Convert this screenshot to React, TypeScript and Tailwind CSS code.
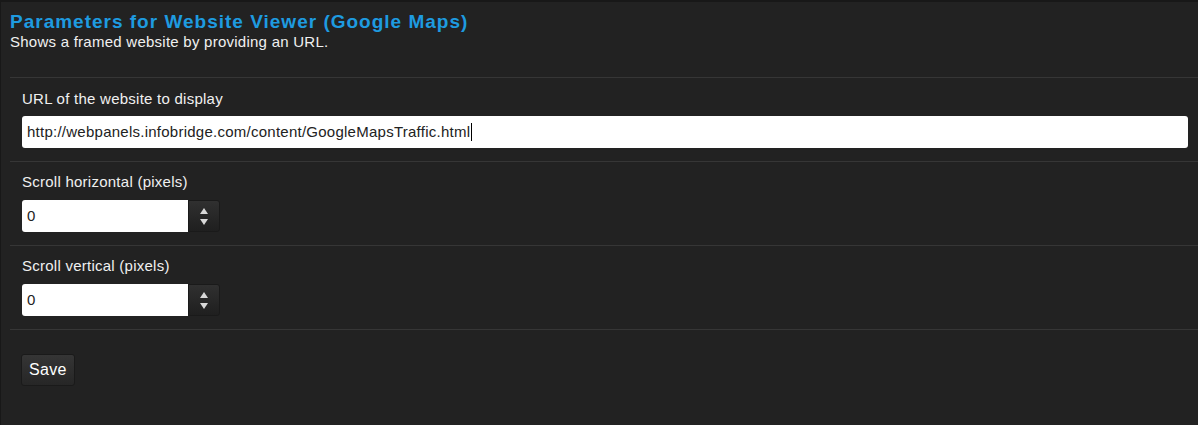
import React from "react";

function Spinner() {
  return (
    <div className="flex h-[32px] w-[32px] flex-col items-center justify-center rounded-r-[3px] border border-[#1a1a1a] bg-gradient-to-b from-[#303030] to-[#1f1f1f]">
      <svg width="8" height="6" viewBox="0 0 8 6" className="mb-[5px]">
        <polygon points="4,0 8,6 0,6" fill="#d8d8d8" />
      </svg>
      <svg width="8" height="6" viewBox="0 0 8 6">
        <polygon points="0,0 8,0 4,6" fill="#d8d8d8" />
      </svg>
    </div>
  );
}

function NumberRow({ label }: { label: string }) {
  return (
    <div className="border-t border-[#363636] pl-[12px] pt-[10px] pb-[13px]">
      <div className="mb-[8px] text-[15px] leading-[20px] tracking-[0.25px] text-[#f0f0f0]">{label}</div>
      <div className="flex">
        <div className="flex h-[32px] w-[166px] items-center rounded-l-[3px] bg-white pl-[5px] text-[15px] text-[#222]">
          0
        </div>
        <Spinner />
      </div>
    </div>
  );
}

export default function App() {
  return (
    <div
      className="h-[425px] w-[1198px] overflow-hidden border-l border-t-2 border-[#181818] bg-[#222222]"
      style={{ fontFamily: '"Liberation Sans", Arial, sans-serif' }}
    >
      <div className="pl-[9px] pt-[9px]">
        <h1 className="text-[19px] font-bold leading-[22px] tracking-[1px] text-[#1e9be0]">
          Parameters for Website Viewer (Google Maps)
        </h1>
        <p className="text-[15px] leading-[18px] tracking-[0.25px] text-[#f0f0f0]">
          Shows a framed website by providing an URL.
        </p>
        <div className="mt-[26px]">
          <div className="border-t border-[#363636] pl-[12px] pt-[11px] pb-[13px]">
            <div className="mb-[7px] text-[15px] leading-[20px] tracking-[0.25px] text-[#f0f0f0]">
              URL of the website to display
            </div>
            <div className="mr-[10px] flex h-[32px] items-center rounded-[3px] bg-white pl-[5px] text-[15px] tracking-[0.25px] text-[#222]">
              http://webpanels.infobridge.com/content/GoogleMapsTraffic.html
              <span className="ml-[1px] inline-block h-[18px] w-[1px] bg-black" />
            </div>
          </div>
          <NumberRow label="Scroll horizontal (pixels)" />
          <NumberRow label="Scroll vertical (pixels)" />
          <div className="border-t border-[#363636] pl-[11px] pt-[24px]">
            <button className="h-[32px] rounded-[3px] border border-[#1a1a1a] bg-gradient-to-b from-[#353535] to-[#262626] px-[7px] text-[16px] tracking-[0.3px] text-white">
              Save
            </button>
          </div>
        </div>
      </div>
    </div>
  );
}
